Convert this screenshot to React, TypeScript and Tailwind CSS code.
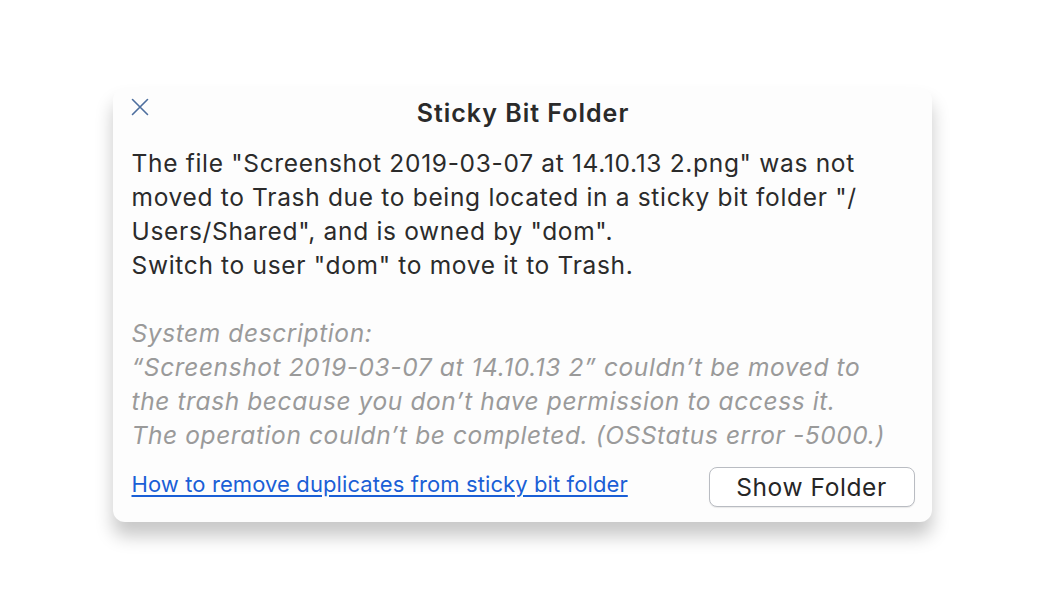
import React from "react";

const font = { fontFamily: "Inter, 'Liberation Sans', sans-serif" };

export default function App() {
  return (
    <div className="w-[1044px] h-[604px] bg-white flex justify-center" style={font}>
      <div className="mt-[88px] w-[819px] h-[434px] rounded-[12px] bg-[#fdfdfd] shadow-[0_14px_18px_rgba(0,0,0,0.22)] relative pl-[19px] pr-[17px] pt-[12px]">
        <button className="absolute left-[18px] top-[10px] w-[18px] h-[18px] flex items-center justify-center text-[#4d6e9e]">
          <svg width="18" height="18" viewBox="0 0 18 18" fill="none">
            <path d="M1.5 1.5L16.5 16.5M16.5 1.5L1.5 16.5" stroke="currentColor" strokeWidth="1.6" strokeLinecap="round" />
          </svg>
        </button>
        <div className="text-center text-[25px] font-semibold text-[#2a2a2a] leading-[26px] tracking-[1px]">
          Sticky Bit Folder
        </div>
        <div className="mt-[20px] text-[24.5px] leading-[34px] text-[#2b2b2b] tracking-[0.68px]">
          <div>The file "Screenshot 2019-03-07 at 14.10.13 2.png" was not</div>
          <div>moved to Trash due to being located in a sticky bit folder "/</div>
          <div>Users/Shared", and is owned by "dom".</div>
          <div>Switch to user "dom" to move it to Trash.</div>
        </div>
        <div className="mt-[34px] text-[24.5px] leading-[34px] text-[#9a9a9a] italic tracking-[0.6px]">
          <div>System description:</div>
          <div>“Screenshot 2019-03-07 at 14.10.13 2” couldn’t be moved to</div>
          <div>the trash because you don’t have permission to access it.</div>
          <div>The operation couldn’t be completed. (OSStatus error -5000.)</div>
        </div>
        <div className="mt-[15px] flex items-center justify-between">
          <a href="#" className="mb-[6px] text-[22px] text-[#1a5fd6] underline underline-offset-[3px] tracking-[0.1px]">
            How to remove duplicates from sticky bit folder
          </a>
          <button className="w-[206px] h-[40px] rounded-[8px] border border-[#b9bcc2] bg-white text-[24.5px] text-[#262626] tracking-[0.6px] shadow-[0_1px_1px_rgba(0,0,0,0.08)]">
            Show Folder
          </button>
        </div>
      </div>
    </div>
  );
}
